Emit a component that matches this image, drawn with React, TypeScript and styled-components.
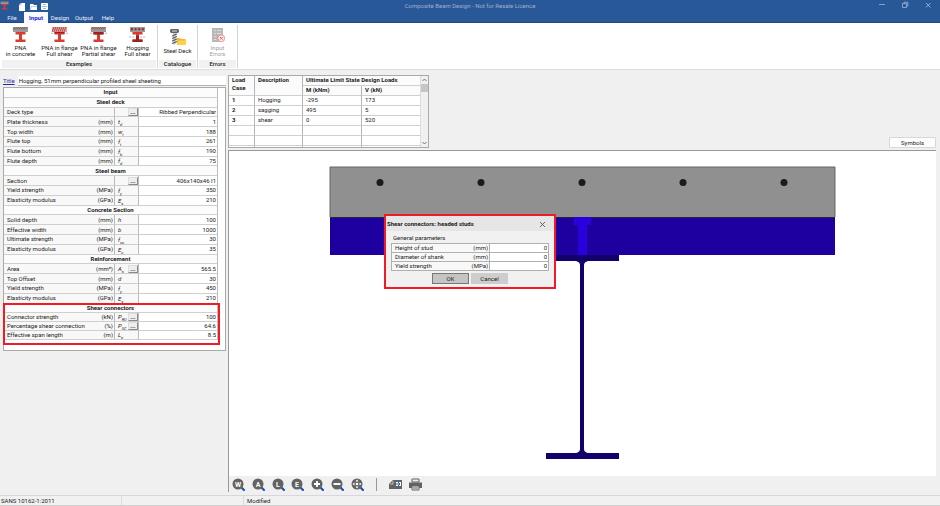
import React from "react";
import styled, { createGlobalStyle, css } from "styled-components";

const Global = createGlobalStyle`
  * { box-sizing: border-box; }
  body { margin: 0; }
  body, button, input, table {
    font-family: Roboto, "Open Sans", sans-serif;
    font-size: 6px;
    line-height: 8px;
    color: #222;
  }
  button { border: 0; padding: 0; background: none; }
  input { border: 0; padding: 0; margin: 0; outline: 0; min-width: 0; }
`;

const Window = styled.div`
  display: flex;
  flex-direction: column;
  min-height: 100vh;
  background: #f0f0f0;
`;

const Header = styled.header`
  background: #295899;
  border-bottom: 1px solid #1f4a86;
`;

const TitleBar = styled.div`
  display: grid;
  grid-template-columns: 1fr auto 1fr;
  align-items: start;
  height: 12px;
`;

const QuickTools = styled.div`
  display: flex;
  align-items: flex-start;
  gap: 3px;
  svg { display: block; }
`;

const QuickButton = styled.button`
  margin-top: 3px;
  width: 8px;
  height: 8px;
`;

const AppLogo = styled.div`
  width: 15px;
  padding-top: 1px;
`;

const WindowTitle = styled.h1`
  margin: 1px 0 0;
  font-size: 6px;
  font-weight: 400;
  line-height: 9px;
  color: #9fb0ca;
`;

const WindowButtons = styled.div`
  display: flex;
  justify-content: flex-end;
  gap: 15px;
  padding: 1px 8px 0 0;
`;

const WindowButton = styled.button`
  width: 8px;
  height: 8px;
  svg { display: block; }
`;

const Tabs = styled.nav`
  display: flex;
  height: 10px;
`;

const Tab = styled.button<{ $active?: boolean }>`
  width: 24px;
  padding-top: 1px;
  color: ${(p) => (p.$active ? "#2020d8" : "#e8eef8")};
  font-weight: ${(p) => (p.$active ? 700 : 400)};
  background: ${(p) => (p.$active ? "#fbfbff" : "transparent")};
  height: ${(p) => (p.$active ? 11 : 10)}px;
`;

const Ribbon = styled.div`
  display: flex;
  padding: 2px 0 1px 1px;
  background: #fff;
  border-bottom: 1px solid #dcdcdc;
`;

const Group = styled.section`
  display: flex;
  flex-direction: column;
  border-right: 1px solid #d4d4d4;
`;

const GroupItems = styled.div`
  display: flex;
  height: 35px;
`;

const GroupName = styled.div`
  height: 8px;
  margin: 0 1px;
  background: #f1f1f1;
  text-align: center;
  font-weight: 500;
`;

const RibbonButton = styled.button<{ $muted?: boolean; $low?: boolean }>`
  display: flex;
  flex-direction: column;
  align-items: center;
  justify-content: flex-start;
  width: 39px;
  padding-top: ${(p) => (p.$low ? 3 : 1)}px;
  line-height: 6px;
  white-space: pre-line;
  color: ${(p) => (p.$muted ? "#a0a0a0" : "#222")};
  svg { display: block; margin-bottom: 2px; }
`;

const Body = styled.main`
  display: flex;
  flex: 1;
  padding: 5px 4px 3px 3px;
`;

const InputPane = styled.aside`
  display: flex;
  flex-direction: column;
  flex: 0 0 223px;
  margin-right: 2px;
`;

const TitleField = styled.div`
  display: flex;
  align-items: center;
  height: 11px;
  margin-bottom: 1px;
  gap: 3px;
  label { color: #2a2aa8; text-decoration: underline; }
  input { flex: 1; height: 10px; padding-left: 1px; background: #fff; border-bottom: 1px solid #b4b4b4; }
`;

const SheetFrame = styled.div`
  height: 264px;
  padding-right: 7px;
  border: 1px solid #aaa;
  background: #fff;
`;

const Sheet = styled.table`
  width: 100%;
  height: 255px;
  table-layout: fixed;
  border-collapse: separate;
  border-spacing: 0;
  td, th {
    height: 9px;
    padding: 0;
    line-height: 8px;
    border-right: 1px solid #bbb;
    border-bottom: 1px solid #cfcfcf;
    font-weight: 400;
    background: #f8f8f8;
    vertical-align: middle;
  }
`;

const HeadCell = styled.th`
  && { font-weight: 700; text-align: center; background: #fcfcfc; }
`;

const Section = styled.tbody<{ $marked?: boolean }>`
  position: relative;
  ${(p) =>
    p.$marked &&
    css`
      &::after {
        content: "";
        position: absolute;
        inset: -1px -2px -2px -1px;
        border: 2px solid #ee1c24;
        pointer-events: none;
      }
    `}
`;

const NameCell = styled.div`
  display: flex;
  justify-content: space-between;
  padding: 0 1px 0 3px;
  white-space: nowrap;
`;

const SymbolCell = styled.div`
  display: flex;
  align-items: center;
  justify-content: space-between;
  height: 8px;
  padding-left: 3px;
  i { line-height: 7px; }
  sub { font-size: 4px; line-height: 0; }
`;

const MoreButton = styled.button`
  width: 10px;
  height: 8px;
  margin-left: auto;
  background: #eee;
  border: 1px solid #ddd;
  border-right-color: #888;
  border-bottom-color: #888;
  font-weight: 700;
  line-height: 3px;
`;

const ValueInput = styled.input`
  display: block;
  width: 100%;
  height: 8px;
  padding-right: 1px;
  text-align: right;
  background: #fff;
`;

const ValueCell = styled.td`
  && { background: #fff; }
`;

const WorkPane = styled.section`
  display: flex;
  flex: 1;
  flex-direction: column;
  min-width: 0;
`;

const WorkTop = styled.div`
  display: flex;
  align-items: flex-end;
  justify-content: space-between;
  margin-bottom: 2px;
`;

const LoadFrame = styled.div`
  display: flex;
  width: 201px;
  height: 73px;
  overflow: hidden;
  border: 1px solid #aaa;
  background: #fff;
`;

const LoadTable = styled.table`
  flex: 1;
  height: 78px;
  table-layout: fixed;
  border-collapse: separate;
  border-spacing: 0;
  td, th {
    height: 10px;
    padding: 0 3px;
    text-align: left;
    line-height: 8px;
    white-space: nowrap;
    vertical-align: top;
    border-right: 1px solid #b4b4b4;
    border-bottom: 1px solid #d0d0d0;
  }
  thead th { background: #fbfbfb; }
  tr > :last-child { border-right-color: #ddd; }
`;

const ScrollTrack = styled.div`
  display: flex;
  flex-direction: column;
  align-items: center;
  width: 7px;
  background: #f0f0f0;
  svg { display: block; }
`;

const ScrollThumb = styled.div`
  width: 7px;
  height: 8px;
  margin-bottom: auto;
  background: #c6c6c6;
`;

const SymbolsButton = styled.button`
  width: 47px;
  height: 11px;
  background: #fdfdfd;
  border: 1px solid #d8d8d8;
  border-radius: 1px;
`;

const ViewFrame = styled.div`
  display: flex;
  flex: 1;
  flex-direction: column;
  border-left: 1px solid #999;
  border-top: 1px solid #999;
`;

const Canvas = styled.div`
  position: relative;
  flex: 1;
  background: #fff;
  > svg { display: block; width: 100%; height: 100%; }
`;

const ViewTools = styled.div`
  display: flex;
  align-items: center;
  height: 16px;
  padding-left: 3px;
  svg { display: block; }
`;

const ZoomTools = styled.div`
  display: flex;
  justify-content: space-between;
  width: 132px;
`;

const Divider = styled.div`
  width: 1px;
  height: 13px;
  margin: 0 12px;
  background: #999;
`;

const OutputTools = styled.div`
  display: flex;
  gap: 6px;
`;

const Dialog = styled.form`
  position: absolute;
  left: 155px;
  top: 63px;
  width: 172px;
  border: 2px solid #ee1c24;
  background: #f1f1f1;
`;

const DialogHead = styled.header`
  display: flex;
  align-items: center;
  justify-content: space-between;
  height: 15px;
  padding: 0 8px 0 1px;
  background: #e6e6e6;
  h2 { margin: 0; font-size: 6px; font-weight: 700; line-height: 8px; }
`;

const DialogBody = styled.div`
  padding: 3px 5px;
  h3 { margin: 0 0 1px 2px; font-size: 6px; font-weight: 400; line-height: 8px; }
`;

const DialogTable = styled.table`
  width: 100%;
  table-layout: fixed;
  border-collapse: collapse;
  td, th { height: 9px; padding: 0; line-height: 8px; font-weight: 400; border: 1px solid #b0b0b0; background: #f8f8f8; }
`;

const DialogActions = styled.div`
  display: flex;
  justify-content: center;
  gap: 2px;
  padding-top: 2px;
`;

const DialogButton = styled.button<{ $primary?: boolean }>`
  width: 37px;
  height: 11px;
  background: ${(p) => (p.$primary ? "#c4c4c4" : "#cdcdcd")};
  border: 1px solid ${(p) => (p.$primary ? "#777" : "#cdcdcd")};
`;

const StatusBar = styled.footer`
  display: flex;
  height: 11px;
  border-top: 1px solid #d8d8d8;
  border-bottom: 1px solid #d0d0d0;
  background: #f1f1f1;
  line-height: 10px;
`;

const StatusItem = styled.div`
  width: 122px;
  padding-left: 1px;
  border-right: 1px solid #ddd;
  &:last-child { flex: 1; padding-left: 3px; border: 0; }
`;

type Variant = "concrete" | "full" | "partial" | "hogging";

function BeamIcon({ variant, size = 17 }: { variant: Variant; size?: number }) {
  const red = "#da3b30";
  const dark = "#9c2222";
  const hatched = variant === "full" ? 6 : 3;
  return (
    <svg width={size} height={size} viewBox="0 0 17 17" aria-hidden="true">
      {variant === "hogging" ? (
        <>
          <rect x="1" y="1" width="15" height="5" fill="#9a9a9a" />
          <path d="M2 3.2H15" stroke={dark} strokeWidth="2" strokeDasharray="2 1.6" />
        </>
      ) : (
        <>
          <rect x="1" y="1" width="15" height="5" fill={variant === "full" ? "#e3a3a0" : "#9a9a9a"} />
          {[1, 3, 5, 7, 9, 11, 13].map((x) => (
            <path
              key={x}
              d={`M${x} ${1 + hatched * 0.8}L${x + 2} 1`}
              stroke={variant === "concrete" ? "#7c5555" : "#b2423f"}
              strokeWidth="0.9"
            />
          ))}
        </>
      )}
      {(variant === "full" || variant === "partial") && (
        <path d="M0 7.3H17" stroke="#999" strokeDasharray="2 1" strokeWidth="0.7" />
      )}
      <path d="M3.5 6H13.5V8.5H10V13.5H13.5V16H3.5V13.5H7V8.5H3.5Z" fill={red} />
      {variant === "full" && <path d="M3.5 6H13.5V7.3H3.5Z" fill={dark} />}
      {variant === "partial" && <path d="M3.5 6H13.5V8.5H3.5Z" fill={dark} />}
      {variant === "hogging" && (
        <>
          <path d="M7 9.5H10V13.5H13.5V16H3.5V13.5H7Z" fill={dark} />
          <path d="M0 11H6M11 11H17" stroke="#999" strokeDasharray="2 1" strokeWidth="0.7" />
        </>
      )}
    </svg>
  );
}

function DeckIcon() {
  return (
    <svg width="18" height="18" viewBox="0 0 18 18" aria-hidden="true">
      <rect x="1" y="1" width="9" height="4" rx="1.4" fill="#666" />
      <path d="M3 3H8" stroke="#ddd" strokeWidth="1" />
      <path d="M3.8 5V15L5.5 17L7.2 15V5Z" fill="#c4c4c4" />
      <path d="M3 8L8 6M3 10.5L8 8.5M3 13L8 11M3 15.5L8 13.5" stroke="#555" strokeWidth="1" />
      <path d="M8 10H11L12 11H16.5V17H8Z" fill="#f4b923" />
      <path d="M9.5 12.5H17.5L16.5 17H8Z" fill="#ffd04c" />
    </svg>
  );
}

function ErrorsIcon() {
  return (
    <svg width="16" height="17" viewBox="0 0 16 17" aria-hidden="true">
      <rect x="2" y="2" width="11" height="14" fill="#b8b8b8" />
      <path d="M4 4.5H6M7 4.5H11M4 7.5H6M7 7.5H11M4 10.5H6M4 13.5H6" stroke="#dedede" />
      <circle cx="11.3" cy="12.3" r="3.4" fill="#fbeaea" stroke="#ec9a9a" />
      <path d="M10 11L12.6 13.6M12.6 11L10 13.6" stroke="#e26060" />
    </svg>
  );
}

function ZoomIcon({ glyph }: { glyph: string }) {
  return (
    <svg width="13" height="13" viewBox="0 0 13 13" aria-hidden="true">
      <path d="M9.5 9.5L12 12" stroke="#1d55b8" strokeWidth="2.2" strokeLinecap="round" />
      <circle cx="6" cy="6" r="5.5" fill="#636363" />
      {glyph.length === 1 && (
        <text x="6" y="8.6" textAnchor="middle" fontSize="7" fontWeight="700" fill="#fff">{glyph}</text>
      )}
      {glyph === "in" && <path d="M3 6H9M6 3V9" stroke="#fff" strokeWidth="1.8" />}
      {glyph === "out" && <path d="M2.5 6H9.5" stroke="#fff" strokeWidth="1.9" />}
      {glyph === "pan" && (
        <>
          <path d="M6 1.5L7.5 3.5H4.5ZM6 10.5L7.5 8.5H4.5ZM1.5 6L3.5 4.5V7.5ZM10.5 6L8.5 4.5V7.5Z" fill="#fff" />
          <circle cx="6" cy="6" r="1.3" fill="#fff" />
        </>
      )}
    </svg>
  );
}

function BeamDrawing() {
  return (
    <svg viewBox="0 0 707 324" preserveAspectRatio="xMidYMin meet" role="img" aria-label="Composite beam section">
      <rect x="101" y="16" width="505" height="50" fill="#909090" />
      <path d="M101 66V16H606V66" fill="none" stroke="#666" />
      <rect x="101" y="66" width="505" height="38" fill="#1d009f" />
      <path d="M101 66.5H606" stroke="#28263c" />
      {[151, 252, 353, 454, 555].map((x) => (
        <circle key={x} cx={x} cy="31.5" r="3.5" fill="#1b1b1f" />
      ))}
      <path d="M345 66H362V74H358V104H349V74H345Z" fill="#2a00dc" />
      <path
        d="M317 104H390V110H359Q355 111 355 114V298Q355 301 359 302H390V308H317V302H347Q351 301 351 298V114Q351 111 347 110H317Z"
        fill="#12006b"
      />
    </svg>
  );
}

type Row = { name: string; unit?: string; symbol?: string; sub?: string; value: string; more?: boolean };
const sections: { title: string; marked?: boolean; rows: Row[] }[] = [
  {
    title: "Steel deck",
    rows: [
      { name: "Deck type", value: "Ribbed Perpendicular", more: true },
      { name: "Plate thickness", unit: "(mm)", symbol: "t", sub: "d", value: "1" },
      { name: "Top width", unit: "(mm)", symbol: "w", sub: "t", value: "188" },
      { name: "Flute top", unit: "(mm)", symbol: "f", sub: "t", value: "261" },
      { name: "Flute bottom", unit: "(mm)", symbol: "f", sub: "b", value: "190" },
      { name: "Flute depth", unit: "(mm)", symbol: "f", sub: "d", value: "75" },
    ],
  },
  {
    title: "Steel beam",
    rows: [
      { name: "Section", value: "406x140x46 I1", more: true },
      { name: "Yield strength", unit: "(MPa)", symbol: "f", sub: "y", value: "350" },
      { name: "Elasticity modulus", unit: "(GPa)", symbol: "E", sub: "s", value: "210" },
    ],
  },
  {
    title: "Concrete Section",
    rows: [
      { name: "Solid depth", unit: "(mm)", symbol: "h", value: "100" },
      { name: "Effective width", unit: "(mm)", symbol: "b", value: "1000" },
      { name: "Ultimate strength", unit: "(MPa)", symbol: "f", sub: "cu", value: "30" },
      { name: "Elasticity modulus", unit: "(GPa)", symbol: "E", sub: "c", value: "35" },
    ],
  },
  {
    title: "Reinforcement",
    rows: [
      { name: "Area", unit: "(mm²)", symbol: "A", sub: "s", value: "565.5", more: true },
      { name: "Top Offset", unit: "(mm)", symbol: "d", value: "30" },
      { name: "Yield strength", unit: "(MPa)", symbol: "f", sub: "y", value: "450" },
      { name: "Elasticity modulus", unit: "(GPa)", symbol: "E", sub: "s", value: "210" },
    ],
  },
  {
    title: "Shear connectors",
    marked: true,
    rows: [
      { name: "Connector strength", unit: "(kN)", symbol: "P", sub: "RU", value: "100", more: true },
      { name: "Percentage shear connection", unit: "(%)", symbol: "P", sub: "SC", value: "64.6", more: true },
      { name: "Effective span length", unit: "(m)", symbol: "L", sub: "e", value: "8.5" },
    ],
  },
];

const loads = [
  ["1", "Hogging", "-295", "173"],
  ["2", "sagging", "495", "5"],
  ["3", "shear", "0", "520"],
  ["", "", "", ""],
  ["", "", "", ""],
  ["", "", "", ""],
];

const examples: [Variant, string][] = [
  ["concrete", "PNA\nin concrete"],
  ["full", "PNA in flange\nFull shear"],
  ["partial", "PNA in flange\nPartial shear"],
  ["hogging", "Hogging\nFull shear"],
];

const zoomTools = [
  ["W", "Zoom window"],
  ["A", "Zoom all"],
  ["L", "Zoom last"],
  ["E", "Zoom extents"],
  ["in", "Zoom in"],
  ["out", "Zoom out"],
  ["pan", "Pan"],
];

const studFields = [
  ["Height of stud", "(mm)"],
  ["Diameter of shank", "(mm)"],
  ["Yield strength", "(MPa)"],
];

function InputSheet() {
  return (
    <SheetFrame>
      <Sheet>
        <colgroup>
          <col />
          <col width="24" />
          <col width="79" />
        </colgroup>
        <tbody>
          <tr><HeadCell colSpan={3}>Input</HeadCell></tr>
        </tbody>
        {sections.map((s) => (
          <Section key={s.title} $marked={s.marked}>
            <tr><HeadCell colSpan={3}>{s.title}</HeadCell></tr>
            {s.rows.map((r) => {
              const id = `${s.title}-${r.name}`.replace(/\s/g, "-");
              return (
                <tr key={r.name}>
                  <th scope="row">
                    <NameCell><label htmlFor={id}>{r.name}</label><span>{r.unit}</span></NameCell>
                  </th>
                  <td>
                    <SymbolCell>
                      <i>{r.symbol}{r.sub && <sub>{r.sub}</sub>}</i>
                      {r.more && <MoreButton type="button" aria-label={`Choose ${r.name}`}>...</MoreButton>}
                    </SymbolCell>
                  </td>
                  <ValueCell><ValueInput id={id} defaultValue={r.value} /></ValueCell>
                </tr>
              );
            })}
          </Section>
        ))}
      </Sheet>
    </SheetFrame>
  );
}

function LoadCases() {
  return (
    <LoadFrame>
      <LoadTable>
        <colgroup>
          <col width="26" />
          <col width="48" />
          <col width="59" />
          <col width="59" />
        </colgroup>
        <thead>
          <tr>
            <th rowSpan={2}>Load<br />Case</th>
            <th rowSpan={2}>Description</th>
            <th colSpan={2}>Ultimate Limit State Design Loads</th>
          </tr>
          <tr><th>M (kNm)</th><th>V (kN)</th></tr>
        </thead>
        <tbody>
          {loads.map((l, i) => (
            <tr key={i}><th scope="row">{l[0]}</th><td>{l[1]}</td><td>{l[2]}</td><td>{l[3]}</td></tr>
          ))}
        </tbody>
      </LoadTable>
      <ScrollTrack>
        <svg width="7" height="8" aria-hidden="true"><path d="M1.5 5L3.5 3L5.5 5" fill="none" stroke="#777" /></svg>
        <ScrollThumb />
        <svg width="7" height="8" aria-hidden="true"><path d="M1.5 3L3.5 5L5.5 3" fill="none" stroke="#777" /></svg>
      </ScrollTrack>
    </LoadFrame>
  );
}

function StudDialog() {
  return (
    <Dialog role="dialog" aria-labelledby="stud-title" onSubmit={(e) => e.preventDefault()}>
      <DialogHead>
        <h2 id="stud-title">Shear connectors: headed studs</h2>
        <WindowButton type="button" aria-label="Close dialog">
          <svg width="8" height="8"><path d="M2 2L7 7M7 2L2 7" stroke="#444" strokeWidth="0.8" /></svg>
        </WindowButton>
      </DialogHead>
      <DialogBody>
        <h3>General parameters</h3>
        <DialogTable>
          <colgroup><col /><col width="59" /></colgroup>
          <tbody>
            {studFields.map(([name, unit], i) => (
              <tr key={name}>
                <th scope="row">
                  <NameCell><label htmlFor={`stud-${i}`}>{name}</label><span>{unit}</span></NameCell>
                </th>
                <ValueCell><ValueInput id={`stud-${i}`} defaultValue="0" /></ValueCell>
              </tr>
            ))}
          </tbody>
        </DialogTable>
        <DialogActions>
          <DialogButton $primary type="submit">OK</DialogButton>
          <DialogButton type="button">Cancel</DialogButton>
        </DialogActions>
      </DialogBody>
    </Dialog>
  );
}

export default function App() {
  return (
    <Window>
      <Global />
      <Header>
        <TitleBar>
          <QuickTools>
            <AppLogo>
              <BeamIcon variant="concrete" size={9} />
            </AppLogo>
            <QuickButton aria-label="New">
              <svg width="8" height="8"><path d="M3 0H7V8H1V2Z" fill="#fff" /><path d="M1 2H3V0" fill="none" stroke="#9db4d8" strokeWidth="0.7" /></svg>
            </QuickButton>
            <QuickButton aria-label="Open">
              <svg width="8" height="8"><path d="M1 1H4L5 2H8V7H1Z" fill="#fff" /><path d="M1 7L2.5 3.5H8" fill="none" stroke="#9db4d8" strokeWidth="0.7" /></svg>
            </QuickButton>
            <QuickButton aria-label="Save">
              <svg width="8" height="8"><rect x="1" width="7" height="7" rx="1" fill="#fff" /><path d="M2 3.5H7M3 5.5H6M3 1.5H6" stroke="#8ba5cf" strokeWidth="0.8" /></svg>
            </QuickButton>
          </QuickTools>
          <WindowTitle>Composite Beam Design - Not for Resale Licence</WindowTitle>
          <WindowButtons>
            <WindowButton aria-label="Minimize">
              <svg width="8" height="8"><path d="M1 3.5H7" stroke="#9fb4d4" strokeWidth="0.8" /></svg>
            </WindowButton>
            <WindowButton aria-label="Restore">
              <svg width="8" height="8"><path d="M1.5 2.5H5.5V6.5H1.5ZM3 2.5V1.2H6.8V5H5.5" fill="none" stroke="#9fb4d4" strokeWidth="0.8" /></svg>
            </WindowButton>
            <WindowButton aria-label="Close">
              <svg width="8" height="8"><path d="M2 2L6.5 6.5M6.5 2L2 6.5" stroke="#b4c4dd" strokeWidth="0.8" /></svg>
            </WindowButton>
          </WindowButtons>
        </TitleBar>
        <Tabs>
          <Tab>File</Tab>
          <Tab $active>Input</Tab>
          <Tab>Design</Tab>
          <Tab>Output</Tab>
          <Tab>Help</Tab>
        </Tabs>
      </Header>
      <Ribbon>
        <Group>
          <GroupItems>
            {examples.map(([variant, label]) => (
              <RibbonButton key={variant}><BeamIcon variant={variant} />{label}</RibbonButton>
            ))}
          </GroupItems>
          <GroupName>Examples</GroupName>
        </Group>
        <Group>
          <GroupItems>
            <RibbonButton $low><DeckIcon />Steel Deck</RibbonButton>
          </GroupItems>
          <GroupName>Catalogue</GroupName>
        </Group>
        <Group>
          <GroupItems>
            <RibbonButton $muted><ErrorsIcon />{"Input\nErrors"}</RibbonButton>
          </GroupItems>
          <GroupName>Errors</GroupName>
        </Group>
      </Ribbon>
      <Body>
        <InputPane>
          <TitleField>
            <label htmlFor="title">Title</label>
            <input id="title" defaultValue="Hogging, 51mm perpendicular profiled sheel sheeting" />
          </TitleField>
          <InputSheet />
        </InputPane>
        <WorkPane>
          <WorkTop>
            <LoadCases />
            <SymbolsButton>Symbols</SymbolsButton>
          </WorkTop>
          <ViewFrame>
            <Canvas>
              <BeamDrawing />
              <StudDialog />
            </Canvas>
            <ViewTools>
              <ZoomTools>
                {zoomTools.map(([glyph, label]) => (
                  <button key={glyph} aria-label={label}><ZoomIcon glyph={glyph} /></button>
                ))}
              </ZoomTools>
              <Divider />
              <OutputTools>
                <button aria-label="Export drawing">
                  <svg width="14" height="13"><path d="M0 11V6L4 2H13V11Z" fill="#636363" /><path d="M4 3V6H1" fill="none" stroke="#ddd" strokeWidth="0.8" /><rect x="7" y="4" width="5" height="4" fill="#fff" /><path d="M7 6H11M9 4L11 6L9 8" fill="none" stroke="#1d55b8" /></svg>
                </button>
                <button aria-label="Print">
                  <svg width="13" height="13"><path d="M3 1H10V4H3Z" fill="#eee" stroke="#636363" /><path d="M0 4.5H13V10H0Z" fill="#636363" /><path d="M3 8H10V12H3Z" fill="#eee" stroke="#636363" /><path d="M4 10H9" stroke="#636363" /></svg>
                </button>
              </OutputTools>
            </ViewTools>
          </ViewFrame>
        </WorkPane>
      </Body>
      <StatusBar>
        <StatusItem>SANS 10162-1:2011</StatusItem>
        <StatusItem />
        <StatusItem>Modified</StatusItem>
      </StatusBar>
    </Window>
  );
}
